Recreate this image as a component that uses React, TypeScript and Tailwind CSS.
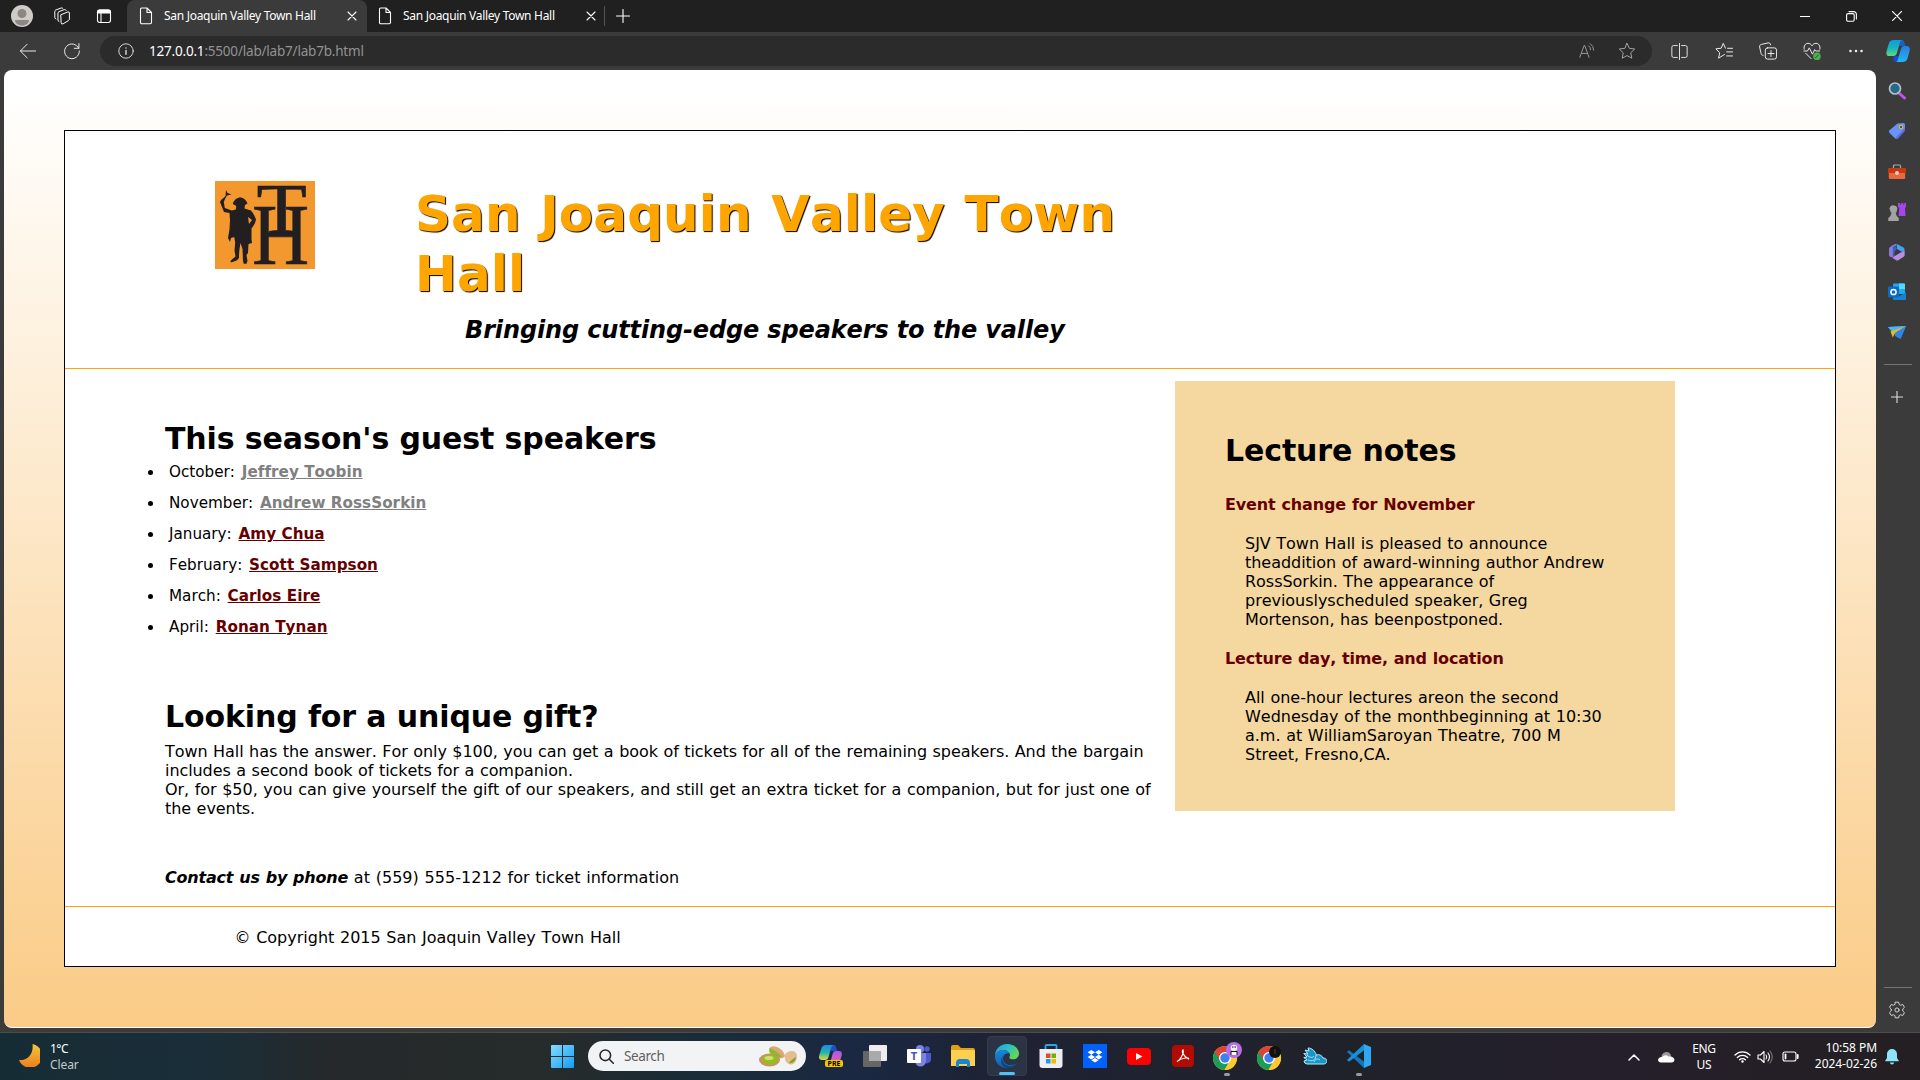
import React from "react";

type SvgProps = { w?: number; h?: number; vb?: string; className?: string; children: React.ReactNode };

function Svg({ w = 20, h, vb = "0 0 20 20", className = "", children }: SvgProps) {
  return (
    <svg width={w} height={h ?? w} viewBox={vb} fill="none" stroke="currentColor" strokeWidth="1.1" strokeLinecap="round" strokeLinejoin="round" className={`shrink-0 ${className}`}>
      {children}
    </svg>
  );
}

function Solid({ w = 24, h, vb = "0 0 24 24", className = "", children }: SvgProps) {
  return (
    <svg width={w} height={h ?? w} viewBox={vb} className={`shrink-0 ${className}`}>
      {children}
    </svg>
  );
}

/* ---------- browser chrome ---------- */

function Tab({ active = false }: { active?: boolean }) {
  return (
    <div className={`flex h-8 items-center ${active ? "w-[240px] rounded-t-lg bg-[#3b3b3b]" : "w-[237px]"}`}>
      <Svg w={14} h={18} vb="0 0 14 18" className={active ? "ml-3" : "ml-[11px]"}>
        <path d="M2.500 1H8l4.500 4.500V15.500a1.200 1.200 0 0 1-1.200 1.200H2.700A1.200 1.200 0 0 1 1.500 15.500V2.200A1.200 1.200 0 0 1 2.700 1ZM8 1v4.500h4.500" />
      </Svg>
      <span className="ml-[11px] w-[183px] whitespace-nowrap text-[12px] leading-4 tracking-[-0.29px]">San Joaquin Valley Town Hall</span>
      <Svg w={10} vb="0 0 10 10">
        <path d="m1 1 8 8M9 1 1 9" />
      </Svg>
    </div>
  );
}

function TitleBar() {
  return (
    <div className="flex h-8 items-center bg-[#202020] text-white">
      <div className="flex w-[127px] items-center pl-[11px]">
        <Solid w={22} vb="0 0 22 22">
          <circle cx="11" cy="11" r="11" fill="#cfccc8" />
          <circle cx="11" cy="8.500" r="4.500" fill="#8b8783" />
          <path d="M4 15h14c0 3-3 5.500-7 5.500S4 18 4 15Z" fill="#8b8783" />
        </Solid>
        <Svg w={18} className="ml-5">
          <path d="m9 8.500 7.500-3q1.700-.5 1.700 1v7q0 1-1 1.600l-6 3.600Q9 19.500 9 17.800ZM14.700 3.800Q14 2.400 12.500 2.900L6.500 5.200q-1 .5-1 1.600v7.700q0 1.300 1.200 1.800M11 1.600Q10.300.6 9 1.100L3 3.400Q2 3.900 2 5v6.500q0 1.300 1.200 1.800" />
        </Svg>
        <Svg w={16} vb="0 0 16 16" className="ml-[25px]">
          <rect x="1.500" y="2" width="13" height="12.500" rx="2.200" />
          <path d="M1.500 5V4a2 2 0 0 1 2-2h9a2 2 0 0 1 2 2v1Z" fill="currentColor" />
          <path d="M5 5v9" />
        </Svg>
      </div>
      <Tab active />
      <Tab />
      <div className="h-5 w-px bg-[#555]" />
      <Svg w={14} vb="0 0 14 14" className="ml-[11px]">
        <path d="M7 .5v13M.5 7h13" />
      </Svg>
      <div className="ml-auto flex">
        <div className="flex w-[46px] items-center justify-center">
          <Svg w={10} vb="0 0 10 10"><path d="M0 5.500h10" /></Svg>
        </div>
        <div className="flex w-[46px] items-center justify-center">
          <Svg w={11} vb="0 0 11 11">
            <rect x=".6" y="2.600" width="7.600" height="7.600" rx="1.500" />
            <path d="M3 .6h4.600a2.800 2.800 0 0 1 2.800 2.800V8" />
          </Svg>
        </div>
        <div className="flex w-[46px] items-center justify-center">
          <Svg w={10} vb="0 0 10 10"><path d="m.3.3 9.400 9.400M9.700.3.3 9.700" /></Svg>
        </div>
      </div>
    </div>
  );
}

function Copilot({ w }: { w: number }) {
  return (
    <Solid w={w}>
      <defs>
        <linearGradient id="cpA" x1="0" y1="0" x2="0" y2="1">
          <stop offset="0" stopColor="#1399dc" /><stop offset=".5" stopColor="#16b5c0" /><stop offset="1" stopColor="#63d67c" />
        </linearGradient>
        <linearGradient id="cpB" x1="0" y1="0" x2="0" y2="1">
          <stop offset="0" stopColor="#2b7be0" /><stop offset="1" stopColor="#20b8f4" />
        </linearGradient>
      </defs>
      <path d="M13 1h3.500c1 0 1.500 1 1.900 2.200L19.500 7h-6Z" fill="#1a5fc4" />
      <path d="M8 17l-1 3.500c.7 1.500 1.500 2 2.500 2h3L14 17Z" fill="#1c49cf" />
      <path d="M8 1h8.500c-1.600 0-2.300 1.600-2.800 3.400l-2.600 9.200c-.6 2.300-1.700 3.400-3.600 3.400H3.200C.5 17 0 14.600.6 12.200L2.800 4.500C3.600 2 5.200 1 8 1Z" fill="url(#cpA)" />
      <path d="M16 23H9.500c1.400 0 2-1.200 2.500-3l2.700-9.300C15.300 8.200 16.300 7 18.400 7H21c2.600 0 3.300 2.500 2.600 5l-2.100 7.500c-.8 2.500-2.500 3.500-5.500 3.500Z" fill="url(#cpB)" />
    </Solid>
  );
}

function Toolbar() {
  const cell = "flex w-11 items-center justify-center";
  return (
    <div className="flex h-[38px] items-center bg-[#3b3b3b] text-[#ececec]">
      <div className="flex w-[100px] items-center pl-[19px]">
        <Svg w={18}><path d="M18.500 10H1.500M9 2.500 1.500 10 9 17.500" /></Svg>
        <Svg w={18} className="ml-[26px]"><path d="M17.500 7A8.200 8.200 0 1 0 18.200 10M17.700 1.800V7H12.500" /></Svg>
      </div>
      <div className="flex h-[30px] w-[1552px] items-center rounded-full bg-[#2b2b2b] pl-[18px]">
        <Svg w={16}><circle cx="10" cy="10" r="9" /><path d="M10 9.200v5M10 6v.3" strokeWidth="1.600" /></Svg>
        <span className="ml-[15px] whitespace-nowrap text-[13.500px] leading-5 tracking-[-0.2px] text-[#929292]">
          <span className="text-white">127.0.0.1</span>:5500/lab/lab7/lab7b.html
        </span>
        <div className="ml-auto flex items-center text-[#a3a3a3]">
          <Svg w={16}><path d="m1 18 5.500-15h.6L12.600 18M3 13h7.600M12 3.500a6 6 0 0 1 2.500 5M14 .8A9.500 9.500 0 0 1 18.300 9" /></Svg>
          <Svg w={18} className="mr-4 ml-[23px]">
            <path d="m10 1.500 2.600 5.500 6 .8-4.400 4.200 1.100 6L10 15.100 4.700 18l1.100-6L1.400 7.800l6-.8Z" />
          </Svg>
        </div>
      </div>
      <div className="ml-[6px] flex items-center">
        <div className={cell}>
          <Svg w={17} className="-ml-px"><path d="M7.500 3H3a2 2 0 0 0-2 2v10a2 2 0 0 0 2 2h4.500M12.500 3H17a2 2 0 0 1 2 2v10a2 2 0 0 1-2 2h-4.500M10 .5v19" /></Svg>
        </div>
        <div className={cell}>
          <Svg w={18}><path d="M14 7h5.500M13 11h6.500M13 15.500h6.500M10.500 14 9 14.800 4 18l1.200-6L1 7.600l5.900-.7L9.200 1.500l2.400 5.300" /></Svg>
        </div>
        <div className={cell}>
          <Svg w={18}>
            <rect x="7" y="6.500" width="12.500" height="12.500" rx="2.500" />
            <path d="M13.300 9.500v6.600M10 12.800h6.600M4.500 15C2.500 14.500 2.300 13 2 11.500L.7 5.500c-.3-1.500.5-2.500 2-2.800L10 1c1.500-.3 2.700.4 3 2.200" />
          </Svg>
        </div>
        <div className={cell}>
          <Svg w={18}>
            <path d="M1.300 8C.5 4.500 2.500 1.500 5.500 1.500c2 0 3.500 1 4.500 2.800 1-1.800 2.500-2.800 4.500-2.800 3 0 5 3 4.200 6.500M3 12.500l6 6M1 10h4l2-3.500 3.500 7 2.500-5 1 1.500h4.500" />
            <circle cx="15.500" cy="16" r="4.200" fill="#4caf50" stroke="none" />
            <path d="m14 17.500 3-3" stroke="#1d5c22" />
          </Svg>
        </div>
        <div className={cell}>
          <svg width="16" height="4" viewBox="0 0 16 4" fill="#ececec"><circle cx="2.500" cy="2" r="1.300" /><circle cx="8" cy="2" r="1.300" /><circle cx="13.500" cy="2" r="1.300" /></svg>
        </div>
        <div className="flex w-[40px] items-center justify-center"><Copilot w={24} /></div>
      </div>
    </div>
  );
}

function SideBar() {
  const cell = "flex h-10 items-center justify-center";
  return (
    <div className="flex w-11 flex-col items-stretch bg-[#3b3b3b] pr-[2px]">
      <div className={`${cell} mt-[1px]`}>
        <Solid w={18} vb="0 0 18 18">
          <path d="m11.500 11.500 5 4.500" stroke="#c850f0" strokeWidth="3" strokeLinecap="round" />
          <circle cx="7" cy="6.500" r="5.500" fill="#256a8c" stroke="#b9bec4" strokeWidth="1.700" />
        </Solid>
      </div>
      <div className={cell}>
        <Solid w={18} vb="0 0 18 18">
          <path d="m9.500 1.500 6-.5q1.500 0 1.500 1.500V8.500L10 16.200q-1.500 1.300-3 0L1.500 11q-1.200-1.500 0-2.700Z" fill="#6a93f5" />
          <path d="M17 6v2.500L10 16.200q-1.500 1.300-3 0Z" fill="#5b6be8" />
          <circle cx="13" cy="5" r="1.600" fill="#334" stroke="#e3b62a" strokeWidth="1.200" />
        </Solid>
      </div>
      <div className={`${cell} mt-px`}>
        <Solid w={18} vb="0 0 18 18">
          <path d="M5.500 5V3q0-1 1-1h5q1 0 1 1v2" fill="none" stroke="#a9a9a9" strokeWidth="1.200" />
          <rect x=".8" y="8" width="16.400" height="8" rx="1" fill="#f0663c" />
          <rect y="5" width="18" height="5" rx="1" fill="#c8380f" />
          <circle cx="9" cy="10" r="2" fill="#d3d3d3" />
        </Solid>
      </div>
      <div className={cell}>
        <Solid w={18} vb="0 0 18 18">
          <path d="M10 0h2v1.500h1.200V0h2v1.500h1V0H18v4l-1 1 .6 8h-7l.7-8L10 4Z" fill="#a545ee" />
          <path d="M6 2.500a3.300 3.300 0 0 1 2.700 5.300v1.400H7.700c.2 2.500 1 4 3 5.800V18H.3v-3c2.200-1.800 3-3.300 3.200-5.800H2.400V7.800A3.300 3.300 0 0 1 6 2.500Z" fill="#a3a3a3" />
        </Solid>
      </div>
      <div className={cell}>
        <Solid w={18} vb="0 0 18 18">
          <path d="m8.500.8 7 3.700q1 .5 1 1.700v4L9 6Z" fill="#40a5f0" />
          <path d="M8.500.8Q6 .8 1.800 4.300q-.8.500-.8 1.700v6q0 1 .8 1.500l4.700 2L6.500 5Z" fill="#8c79dc" />
          <path d="M6.800 2.400 9 6 6.500 9v5.500L4.800 14V4Z" fill="#3a60bd" />
          <path d="m16.500 8.500-4 1-6 3.500-1.500 2.200 3.200 2q1 .5 2 0l5.500-3.400q1-.7 1-1.800Z" fill="#bd8ce0" />
          <path d="m9 6 3.500 3.500-6 3.500V9Z" fill="#3b3b3b" />
        </Solid>
      </div>
      <div className={cell}>
        <Solid w={18} vb="0 0 18 18">
          <path d="M5 1.500Q5 .5 6 .5h10q1 0 1 1V11H5Z" fill="#28a8ea" />
          <path d="M11 .5h5q1 0 1 1V6h-6Z" fill="#50d9ff" />
          <path d="m5 11 6.500 2L18 9.500V16q0 1-1 1H6q-1 0-1-1Z" fill="#1384d4" />
          <rect y="3.500" width="11" height="11" rx="1" fill="#0a6ac8" />
          <circle cx="5.500" cy="9" r="2.600" fill="none" stroke="#fff" strokeWidth="1.500" />
        </Solid>
      </div>
      <div className={cell}>
        <Solid w={18} vb="0 0 18 18">
          <path d="M0 4 18 3 12.500 15.500 8 12.500Z" fill="#3c9df2" />
          <path d="M0 4 18 3 4 9Z" fill="#43b8f5" />
          <path d="M18 3 2.500 8.500 4.800 14.500 7 10Z" fill="#f3b61f" />
          <path d="m18 3-11 7v3l5.500 3Z" fill="#2f84ea" />
        </Solid>
      </div>
      <div className="mr-[6px] ml-[8px] mt-[12px] h-px shrink-0 bg-[#737373]" />
      <div className="mt-[26px] flex justify-center text-[#ddd]"><Svg w={12} vb="0 0 12 12"><path d="M6 0v12M0 6h12" /></Svg></div>
      <div className="mr-[6px] ml-[8px] mt-auto h-px shrink-0 bg-[#737373]" />
      <div className="mt-[13px] mb-[9px] flex justify-center text-[#d5d5d5]">
        <Svg w={18}>
          <path d="M8.200 1.300h3.600l.6 2.500 1.500.9 2.500-.8 1.900 3.100-1.900 1.900v2.200l1.900 1.900-1.900 3.100-2.500-.8-1.500.9-.6 2.500H8.200l-.6-2.500-1.500-.9-2.500.8L1.700 13l1.900-1.900V8.900L1.700 7l1.900-3.100 2.500.8 1.500-.9Z" />
          <circle cx="10" cy="10" r="2.300" />
        </Svg>
      </div>
    </div>
  );
}

/* ---------- web page ---------- */

function Logo() {
  return (
    <svg width="100" height="88" viewBox="0 0 100 88" className="shrink-0">
      <rect width="100" height="88" fill="#f2982f" />
      <g fill="#231f20">
        <path d="m11 9 1.500 3 4 1.500-4.500 1-2 3.500-1.200 3 1 6 7 2.500 4-1 .5-3.500-3.500-2C19 19 21 17.500 25 16.300c4 .5 6 2.500 7.500 6.200L30 24l-.5 3.500 6.500 2c2.500 3 4 6 5 9-.5 3-2 6-4.500 9V58l.5 4-3.500 1-.5 9-1.500 2 1 6-1 2.800h-2.800L28 80l-.5-12-2-6-1 6-.5 6v3l-2 2.200-5 2H15.500l.3-1.800 4.700-3.900-1-6 .7-8-1-5.500L16 57l-1 4-2-4 1.500-9 .5-9-.5-7-5.500-1-4-10c.5-2 2-3 3.500-4l2-2Z" />
        <path d="m33 36 4 3-3 4Z" fill="#f2982f" />
        <text transform="translate(37 82.500) scale(.91 1)" fontFamily="Liberation Serif, serif" fontSize="87" stroke="#231f20" strokeWidth=".6">H</text>
        <text transform="translate(41.500 52) scale(1.160 1)" fontFamily="Liberation Serif, serif" fontSize="71" stroke="#231f20" strokeWidth=".6">T</text>
      </g>
    </svg>
  );
}

const speakers = [
  { month: "October", name: "Jeffrey Toobin", color: "text-[#808080]" },
  { month: "November", name: "Andrew RossSorkin", color: "text-[#808080]" },
  { month: "January", name: "Amy Chua", color: "text-[#660000]" },
  { month: "February", name: "Scott Sampson", color: "text-[#660000]" },
  { month: "March", name: "Carlos Eire", color: "text-[#660000]" },
  { month: "April", name: "Ronan Tynan", color: "text-[#660000]" },
];

const body = "whitespace-nowrap text-[16px] leading-[19px] [word-spacing:0.55px]";
const heading = "whitespace-nowrap text-[30px] leading-9 font-bold tracking-[-0.12px]";

function WebPage() {
  return (
    <div className="flex h-[837px] w-[1772px] flex-col border border-black bg-white font-['DejaVu_Sans',Verdana,sans-serif] text-black [font-kerning:none]">
      <header className="flex h-[238px] shrink-0 border-b border-[#ffa500] pt-[50px] pl-[150px]">
        <Logo />
        <div className="ml-[100px] pt-[3px]">
          <h1 className="w-[720px] text-[50px] leading-[60px] font-bold tracking-[0.1px] text-[#ffa500] [text-shadow:1px_1px_1px_black] [word-spacing:2px]">
            San Joaquin Valley Town
            <br />
            Hall
          </h1>
          <h3 className="mt-[11px] ml-[50px] whitespace-nowrap text-[24px] leading-[30px] font-bold tracking-[-0.14px] italic">Bringing cutting-edge speakers to the valley</h3>
        </div>
      </header>

      <div className="flex h-[538px] shrink-0 border-b border-[#ffa500] pl-[100px]">
        <main className="w-[1010px] pt-[52px]">
          <h2 className={heading}>This season's guest speakers</h2>
          <ul>
            {speakers.map((s) => (
              <li key={s.name} className="-ml-[17px] flex h-[31px] items-center whitespace-nowrap text-[15.200px]">
                <span className="mr-[16px] size-[5px] rounded-full bg-black" />
                <span>
                  <span className="[word-spacing:2px]">{s.month}: </span>
                  <a className={`font-bold tracking-[0.04px] underline ${s.color}`}>{s.name}</a>
                </span>
              </li>
            ))}
          </ul>
          <h2 className={`${heading} mt-[56px]`}>Looking for a unique gift?</h2>
          <p className={`${body} mt-[7px] tracking-[-0.07px]`}>
            Town Hall has the answer. For only $100, you can get a book of tickets for all of the remaining speakers. And the bargain
            <br />
            includes a second book of tickets for a companion.
            <br />
            <span className="tracking-[-0.04px]">Or, for $50, you can give yourself the gift of our speakers, and still get an extra ticket for a companion, but for just one of</span>
            <br />
            the events.
          </p>
          <p className={`${body} mt-[50px] tracking-[0.04px]`}>
            <b className="tracking-[-0.2px] italic">Contact us by phone</b> at (559) 555-1212 for ticket information
          </p>
        </main>

        <aside className="mt-3 h-[430px] w-[500px] bg-[#f5d7a0] pt-[52px] pl-[50px]">
          <h2 className={heading}>Lecture notes</h2>
          <h3 className={`${body} mt-[26px] font-bold tracking-[-0.15px] text-[#660000]`}>Event change for November</h3>
          <p className={`${body} mt-5 ml-5 tracking-[-0.03px]`}>
            SJV Town Hall is pleased to announce
            <br />
            theaddition of award-winning author Andrew
            <br />
            RossSorkin. The appearance of
            <br />
            previouslyscheduled speaker, Greg
            <br />
            Mortenson, has beenpostponed.
          </p>
          <h3 className={`${body} mt-5 font-bold tracking-[-0.18px] text-[#660000]`}>Lecture day, time, and location</h3>
          <p className={`${body} mt-5 ml-5 tracking-[-0.01px]`}>
            All one-hour lectures areon the second
            <br />
            Wednesday of the monthbeginning at 10:30
            <br />
            a.m. at WilliamSaroyan Theatre, 700 M
            <br />
            Street, Fresno,CA.
          </p>
        </aside>
      </div>

      <footer className={`${body} pt-[21px] pl-[169.500px]`}>© Copyright 2015 San Joaquin Valley Town Hall</footer>
    </div>
  );
}

/* ---------- taskbar ---------- */

function Chrome({ badge }: { badge: React.ReactNode }) {
  return (
    <Solid w={30} h={28} vb="0 0 30 28">
      <circle cx="13" cy="16" r="12" fill="#fcc934" />
      <path d="M2.600 10A12 12 0 0 0 12.500 28L18 18.500 13 16l-3-6Z" fill="#199d57" />
      <path d="M23.400 10H13v6l5 2.500L12.500 28A12 12 0 0 0 23.400 10Z" fill="#fcc934" />
      <path d="M2.600 10A12 12 0 0 1 23.400 10H13l-5 8.500Z" fill="#dc4437" />
      <circle cx="13" cy="16" r="6" fill="#fff" />
      <circle cx="13" cy="16" r="4.700" fill="#3f7fee" />
      {badge}
    </Solid>
  );
}

const icons: React.ReactNode[] = [
  <div key="copilot" className="relative h-[22px] w-6">
    <svg width="23" height="20" viewBox="0 0 23 20">
      <defs>
        <linearGradient id="cpC" x1="0" y1="0" x2="0" y2="1"><stop stopColor="#2187f3" /><stop offset=".5" stopColor="#24b5a8" /><stop offset="1" stopColor="#e8d53b" /></linearGradient>
        <linearGradient id="cpD" x1="0" y1="0" x2="0" y2="1"><stop stopColor="#a558e8" /><stop offset="1" stopColor="#f0679d" /></linearGradient>
      </defs>
      <path d="M11 0h4c2 0 2 3 3.500 6H12Z" fill="#1c50c8" />
      <path d="M7 0h8c-2 0-2.500 2-3 3.500L9.500 12c-.5 2-1.500 3-3.500 3H3c-3 0-3.500-2-2.700-5L2.200 4C3 1 4.500 0 7 0Z" fill="url(#cpC)" />
      <path d="M15 20H9c1.500 0 2-1.500 2.400-3l2.200-8C14 7 15 6 17 6h3c2.500 0 3.300 2 2.700 4.500L21 16c-.8 3-3 4-6 4Z" fill="url(#cpD)" />
    </svg>
    <span className="absolute top-[15px] left-[6px] flex h-[7px] w-[18px] items-center justify-center rounded-[2px] bg-[#f7c600] font-['Noto_Sans'] text-[7px] leading-none font-bold text-black">PRE</span>
  </div>,
  <Solid key="view" w={24} h={22} vb="0 0 24 22">
    <rect y="6" width="18" height="16" rx="1" fill="#666" />
    <rect x="6" width="18" height="16" rx="1" fill="#eee" />
    <path d="M6 6h12v10H6Z" fill="#aaa" />
  </Solid>,
  <Solid key="teams" w={24} h={22} vb="0 0 24 22">
    <circle cx="20" cy="4" r="2.700" fill="#5059c9" />
    <path d="M16 8h8v6a4 4 0 0 1-7 3Z" fill="#5059c9" />
    <circle cx="13" cy="4" r="4" fill="#7b83eb" />
    <path d="M8 8h11v8a5.500 5.500 0 0 1-11 0Z" fill="#7b83eb" />
    <rect y="4" width="14" height="14" rx="1" fill="#fff" />
    <text x="7" y="15" textAnchor="middle" fontFamily="Noto Sans" fontWeight="700" fontSize="11" fill="#4b53bc">T</text>
  </Solid>,
  <Solid key="folder" w={24} h={22} vb="0 0 24 22">
    <path d="M0 2q0-2 2-2h5l3 3h12q2 0 2 2v4H0Z" fill="#e0a01a" />
    <path d="M0 5h22q2 0 2 1v15H0Z" fill="#fccf4d" />
    <path d="M5 22v-4q0-4 4-4h6q4 0 4 4v4h-3v-3H8v3Z" fill="#1a83d6" />
  </Solid>,
  <Solid key="edge" w={24}>
    <defs>
      <linearGradient id="edA" x1="0" y1="0" x2="1" y2=".6"><stop stopColor="#1f9de0" /><stop offset=".5" stopColor="#2bbfc7" /><stop offset="1" stopColor="#66d84e" /></linearGradient>
      <linearGradient id="edB" x1="0" y1="0" x2="0" y2="1"><stop stopColor="#1a86d6" /><stop offset="1" stopColor="#0f5fb3" /></linearGradient>
    </defs>
    <path d="M0 12C0 5 5 0 12 0s12 4.500 12 9.500c0 3.500-2.500 5.800-6 5.800-2.500 0-3.700-.8-3.700-1.600 0-.6.7-1 .7-2.500C15 8 11.500 6 8 6 4.500 6 1 8 0 12Z" fill="url(#edA)" />
    <path d="M0 12.500C.5 8.500 4 6 8 6c3 0 5.500 1.500 6.500 3.500C10 8.500 8 12 8 14.500c0 4 3.500 6.500 7.500 6.500 3 0 5.500-1 6.500-2-1.500 2.800-5 5-9.700 5C5 24 0 19 0 12.500Z" fill="url(#edB)" />
    <path d="M9 10c-3 3-2 9 2 11 4 2.500 9 .5 11.500-2.500-1 3-5 5.500-10 5.500-6-.5-9-8-3.500-14Z" fill="#12427c" />
  </Solid>,
  <Solid key="store" w={24}>
    <path d="M6.500 6V2q0-1 1-1h9q1 0 1 1v4" fill="none" stroke="#2aa6e5" strokeWidth="1.800" />
    <path d="M.5 5h23v16q0 3-3 3h-17q-3 0-3-3Z" fill="#eceef1" />
    <path d="M7 9.500h4.500V14H7Z" fill="#e8491d" /><path d="M12.500 9.500H17V14h-4.500Z" fill="#6bb700" />
    <path d="M7 15h4.500v4.500H7Z" fill="#1b9de2" /><path d="M12.500 15H17v4.500h-4.500Z" fill="#f9b500" />
  </Solid>,
  <Solid key="dropbox" w={24}>
    <path d="M0 0h24v24H0Z" fill="#0061ff" />
    <path d="m8.300 6 3.700 2.300-3.700 2.400-3.700-2.400ZM15.700 6l3.700 2.300-3.700 2.400L12 8.300ZM8.300 10.700l3.700 2.400-3.700 2.300-3.700-2.300ZM15.700 10.700l3.700 2.400-3.700 2.300-3.700-2.300ZM12 14l3.600 2.300L12 18.600l-3.600-2.300Z" fill="#fff" />
  </Solid>,
  <Solid key="youtube" w={24} h={17} vb="0 0 24 17">
    <rect width="24" height="17" rx="4" fill="#f00" /><path d="m9 5 6.500 3.500L9 12Z" fill="#fff" />
  </Solid>,
  <Solid key="acrobat" w={22} vb="0 0 22 22">
    <rect width="22" height="22" rx="4" fill="#b30b00" />
    <path d="M5 16.500c2.500-1 7.500-8 6-11.500-1.500 1-.5 5.500 5.500 9 1.500-1.500-6-2-11.500 2.500Z" fill="none" stroke="#fff" strokeWidth="1.200" />
  </Solid>,
  <Chrome key="chrome1" badge={<g><circle cx="22" cy="8" r="8" fill="#b46ee6" /><circle cx="22" cy="6" r="3.300" fill="#eee" /><path d="M19 13V9.500h6V13" fill="#fff" stroke="#111" strokeWidth="1" /><path d="M20 5h1.500m1 0H24" stroke="#111" /></g>} />,
  <Chrome key="chrome2" badge={<g><circle cx="19" cy="10" r="6" fill="#111" /><path d="M19 7v5" stroke="#444" /></g>} />,
  <Solid key="cloud" w={24} h={18} vb="0 0 24 18">
    <path d="M4 17Q1 16.500 1 14l3-1L.8 10.500 4 10 .8 6.500l4 .5L2 3l4 1-1-3c4 0 7 3 8.500 7a5 5 0 0 1 6.500 3c5 0 5 6 .5 6Z" fill="#1597c9" stroke="#c4e8f5" strokeWidth="1" />
    <path d="M5 13c4 2 8 0 8-5M4 8c3 3 6 3 7 1M11 15c1-3 4-4 6-2" fill="none" stroke="#c4e8f5" strokeWidth=".9" />
  </Solid>,
  <Solid key="vscode" w={24}>
    <path d="m0 8 2-1.800L17.500 18 17 24Z" fill="#1178b8" />
    <path d="m0 16 2 1.800L17.500 6 17 0Z" fill="#1b8fd6" />
    <path d="M17 0 24 3v18l-7 3Z" fill="#2fa8f3" />
  </Solid>,
];

function Taskbar() {
  return (
    <div className="flex h-[47px] items-center bg-[linear-gradient(90deg,#162c34_0px,#1a2e39_200px,#25292b_330px,#262b2b_560px,#1a2c36_680px,#1a2842_860px,#1e2233_1000px,#20222a_1350px,#251f2b_1620px,#231f22_1920px)] text-[12px] leading-4 text-white">
      <div className="flex w-[540px] items-center pl-[19px]">
        <Solid w={21} h={23} vb="0 0 21 23" className="-mt-[2px]">
          <defs><linearGradient id="moon" x1="0" y1="0" x2="0" y2="1"><stop stopColor="#f5c73f" /><stop offset="1" stopColor="#ee7d1c" /></linearGradient></defs>
          <path d="M13.500 0A12 12 0 1 1 0 16C7 17 15 11 13.500 0Z" fill="url(#moon)" />
        </Solid>
        <div className="ml-[10px]">
          <div className="tracking-[-0.5px]">1°C</div>
          <div className="tracking-[-0.1px] text-[#c3cacd]">Clear</div>
        </div>
      </div>
      <div className="flex w-11 justify-center">
        <Solid w={23} vb="0 0 23 23">
          <defs><linearGradient id="win" x1="0" y1="0" x2="1" y2="1"><stop stopColor="#85ddfd" /><stop offset="1" stopColor="#139cf5" /></linearGradient></defs>
          <path d="M0 1q0-1 1-1h10v11H0ZM12 0h10q1 0 1 1v10H12ZM0 12h11v11H1q-1 0-1-1ZM12 12h11v10q0 1-1 1H12Z" fill="url(#win)" />
        </Solid>
      </div>
      <div className="ml-1 -mt-px flex h-[30px] w-[218px] items-center rounded-full bg-[#f2f3f4] pr-[9px] pl-[11px] text-[#292929]">
        <Svg w={15} vb="0 0 15 15"><g strokeWidth="1.600"><circle cx="6.300" cy="6.300" r="5.300" /><path d="m10.300 10.300 4 4" /></g></Svg>
        <span className="ml-[10px] text-[13.500px] tracking-[-0.4px] text-[#606060]">Search</span>
        <Solid w={38} h={22} vb="0 0 38 22" className="ml-auto">
          <path d="M10 4C12-2 24 2 26 11c-2 4-9 2-13 0Z" fill="#d9a877" />
          <path d="M11 3c4 2 9 5 12 9-5 0-12-2-13-6Z" fill="#8fb82d" />
          <ellipse cx="10.500" cy="15" rx="10.500" ry="6.500" fill="#c99069" />
          <ellipse cx="11" cy="14.500" rx="8" ry="5" fill="#96bd20" />
          <ellipse cx="10" cy="13" rx="4.500" ry="2" fill="#d0e070" />
          <path d="M26 10c2-5 12-6 12 1 0 6-4 10-8 8-3-1-5-5-4-9Z" fill="#e5bd8c" />
          <path d="M37 12c0 4-4 7-7 6 2-3 4-4 7-6Z" fill="#7da52b" />
        </Solid>
      </div>
      <div className="ml-[3px] flex h-full">
        {icons.map((icon, i) => (
          <div key={i} className={`relative mx-[2px] mt-[3px] flex h-10 w-10 items-center justify-center rounded-[4px] ${i === 4 ? "border border-[#343d4c] bg-[#2b3344]" : ""}`}>
            {icon}
            {i === 4 && <span className="absolute bottom-0 h-[3px] w-4 rounded-full bg-[#4cc2ff]" />}
            {(i === 9 || i === 12) && <span className="absolute bottom-0 h-[3px] w-[6px] rounded-full bg-[#9b9b9b]" />}
          </div>
        ))}
      </div>
      <div className="ml-auto flex items-center">
        <Svg w={12} h={8} vb="0 0 12 8"><path d="m1 7 5-5 5 5" strokeWidth="1.500" /></Svg>
        <Solid w={17} h={12} vb="0 0 17 12" className="ml-[18px]">
          <path d="M3.500 7Q3 2 8 1q4-.5 5 4 1 2 0 4Z" fill="#999" />
          <path d="M3 11.500Q0 11 0 8.500 1 5.500 4 6q3-3 6.500-.5Q16 5 16.500 9q-.5 2.500-3 2.500Z" fill="#fff" />
        </Solid>
        <div className="mr-[2px] ml-[17px] w-6 text-center tracking-[-0.3px]">ENG<br />US</div>
      </div>
      <div className="flex w-[202px] items-center pl-[16px]">
        <Svg w={17} h={13} vb="0 0 17 13">
          <g strokeWidth="1.300"><path d="M1 5a10.500 10.500 0 0 1 15 0M3.300 7.500a7.300 7.300 0 0 1 10.400 0M5.600 9.800a4 4 0 0 1 5.800 0" /></g>
          <circle cx="8.500" cy="11.500" r="1.200" fill="currentColor" stroke="none" />
        </Svg>
        <Svg w={16} h={14} vb="0 0 16 14" className="ml-[6px]">
          <path d="M1 5h2.500L7 1.500v11L3.500 9H1Z" /><path d="M9 5q1.500 2 0 4M11 3q3 4 0 8" /><path d="M13 1q4.500 6 0 12" stroke="#777" />
        </Svg>
        <Svg w={17} h={11} vb="0 0 17 11" className="ml-[9px]">
          <rect x="1" y="1" width="13" height="9" rx="2" /><path d="M3.500 3.500v4" strokeWidth="1.800" /><path d="M15.700 4v3" strokeWidth="1.800" />
        </Svg>
        <div className="-mt-px ml-auto text-right whitespace-nowrap tracking-[-0.05px]">10:58 PM<br />2024-02-26</div>
        <Solid w={14} h={16} vb="0 0 14 16" className="ml-2">
          <path d="M7 0a5 5 0 0 1 5 5v4l1.700 2.500v.7H.3v-.7L2 9V5a5 5 0 0 1 5-5ZM5 13.500h4a2 2 0 0 1-4 0Z" fill="#8ee4fb" />
        </Solid>
        <div className="w-[21px] shrink-0" />
      </div>
    </div>
  );
}

export default function App() {
  return (
    <div className="flex h-[1080px] w-[1920px] flex-col overflow-hidden bg-[#3b3b3b] font-['Noto_Sans','Open_Sans',sans-serif]">
      <TitleBar />
      <Toolbar />
      <div className="flex h-[958px] pl-1">
        <div className="w-[1872px] overflow-hidden rounded-lg border-b border-white bg-[linear-gradient(180deg,#ffffff_2%,#facb86_100%)] pt-[60px] pl-[60px]">
          <WebPage />
        </div>
        <SideBar />
      </div>
      <div className="h-[5px] border-b border-[#4d4d4d] bg-[#3b3b3b]" />
      <Taskbar />
    </div>
  );
}
